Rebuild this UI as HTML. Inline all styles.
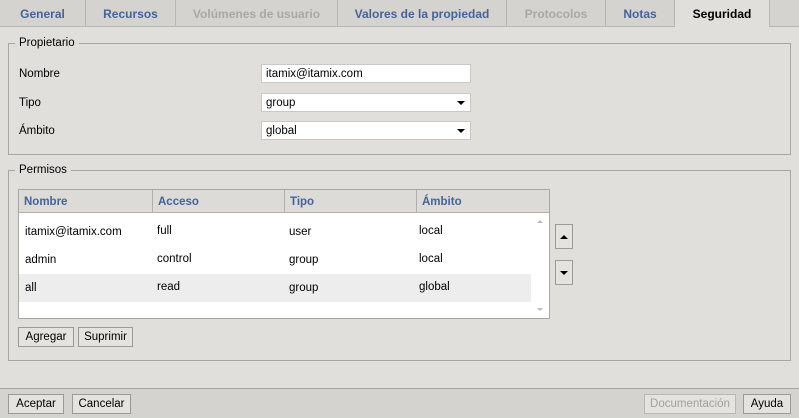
<!DOCTYPE html>
<html><head><meta charset="utf-8"><style>
*{box-sizing:border-box;margin:0;padding:0}
body{width:799px;height:418px;background:#e0dfdb;font-family:"Liberation Sans",sans-serif;font-size:11.5px;color:#000;position:relative;overflow:hidden}
.a{position:absolute}
.tab{position:absolute;top:0;height:27px;background:#d4d3cf;border-right:1px solid #b8b7b3;border-bottom:1px solid #b8b7b3;text-align:center;line-height:28px;font-weight:bold;font-size:12px;color:#46639a}
.dis{color:#a8a8a8}
.fs{position:absolute;border:1px solid #a6a6a2}
.lg{position:absolute;background:#e0dfdb;padding:0 4px;top:-7px;left:6px}
.inp{position:absolute;left:261px;width:210px;height:19px;background:#fff;border:1px solid #c8c8c4;padding-left:4px;line-height:19px}
.arr{position:absolute;right:5px;top:7px;width:0;height:0;border-left:4px solid transparent;border-right:4px solid transparent;border-top:4px solid #000}
.btn{position:absolute;height:20px;border:1px solid #9a9a96;background:#e4e3df;text-align:center;line-height:19px}
.th{position:absolute;top:0;height:22px;line-height:24px;padding-left:5px;font-weight:bold;color:#46639a;border-right:1px solid #b0b0ac}
.c{position:absolute;padding-left:6px}
</style></head><body>
<div class="tab" style="left:0;width:86px">General</div>
<div class="tab" style="left:86px;width:90px">Recursos</div>
<div class="tab dis" style="left:176px;width:162px">Volúmenes de usuario</div>
<div class="tab" style="left:338px;width:169px">Valores de la propiedad</div>
<div class="tab dis" style="left:507px;width:99px">Protocolos</div>
<div class="tab" style="left:606px;width:69px">Notas</div>
<div class="tab" style="left:675px;width:95px;background:#e0dfdb;border-bottom:none;color:#000">Seguridad</div>
<div class="tab" style="left:770px;width:29px;border-right:none"></div>

<div class="fs" style="left:8px;top:43px;width:783px;height:112px"><span class="lg">Propietario</span></div>
<div class="a" style="left:19px;top:68px">Nombre</div>
<div class="a" style="left:19px;top:97px">Tipo</div>
<div class="a" style="left:19px;top:125px">Ámbito</div>
<div class="inp" style="top:64px">itamix@itamix.com</div>
<div class="inp" style="top:93px">group<span class="arr"></span></div>
<div class="inp" style="top:121px">global<span class="arr"></span></div>

<div class="fs" style="left:8px;top:170px;width:783px;height:191px"><span class="lg">Permisos</span></div>
<div class="a" style="left:18px;top:189px;width:532px;height:130px;border:1px solid #a6a6a2;background:#fff">
 <div class="a" style="left:0;top:0;width:530px;height:23px;background:#dcdbd7;border-bottom:1px solid #b0b0ac">
  <div class="th" style="left:0;width:134px">Nombre</div>
  <div class="th" style="left:134px;width:132px">Acceso</div>
  <div class="th" style="left:266px;width:132px">Tipo</div>
  <div class="th" style="left:398px;width:132px;border-right:none">Ámbito</div>
 </div>
 <div class="a" style="left:0;top:84px;width:512px;height:28px;background:#ededed"></div>
 <div class="c" style="left:0;top:36px">itamix@itamix.com</div><div class="c" style="left:132px;top:35px">full</div><div class="c" style="left:264px;top:36px">user</div><div class="c" style="left:394px;top:35px">local</div>
 <div class="c" style="left:0;top:64px">admin</div><div class="c" style="left:132px;top:63px">control</div><div class="c" style="left:264px;top:64px">group</div><div class="c" style="left:394px;top:63px">local</div>
 <div class="c" style="left:0;top:92px">all</div><div class="c" style="left:132px;top:91px">read</div><div class="c" style="left:264px;top:92px">group</div><div class="c" style="left:394px;top:91px">global</div>
 <div class="a" style="left:518px;top:30px;border-left:3px solid transparent;border-right:3px solid transparent;border-bottom:3px solid #bbb"></div>
 <div class="a" style="left:518px;top:118px;border-left:3px solid transparent;border-right:3px solid transparent;border-top:3px solid #bbb"></div>
</div>
<div class="btn" style="left:555px;top:224px;width:18px;height:25px"><span class="a" style="left:4px;top:10px;border-left:4px solid transparent;border-right:4px solid transparent;border-bottom:4px solid #000"></span></div>
<div class="btn" style="left:555px;top:260px;width:18px;height:25px"><span class="a" style="left:4px;top:10px;border-left:4px solid transparent;border-right:4px solid transparent;border-top:4px solid #000"></span></div>
<div class="btn" style="left:18px;top:327px;width:56px">Agregar</div>
<div class="btn" style="left:78px;top:327px;width:55px">Suprimir</div>

<div class="a" style="left:0;top:388px;width:799px;height:30px;background:#d4d3cf;border-top:1px solid #a6a6a2"></div>
<div class="btn" style="left:8px;top:394px;width:56px">Aceptar</div>
<div class="btn" style="left:72px;top:394px;width:59px">Cancelar</div>
<div class="btn" style="left:644px;top:394px;width:92px;color:#a0a0a0;border-color:#b8b8b4">Documentación</div>
<div class="btn" style="left:743px;top:394px;width:48px">Ayuda</div>
</body></html>
